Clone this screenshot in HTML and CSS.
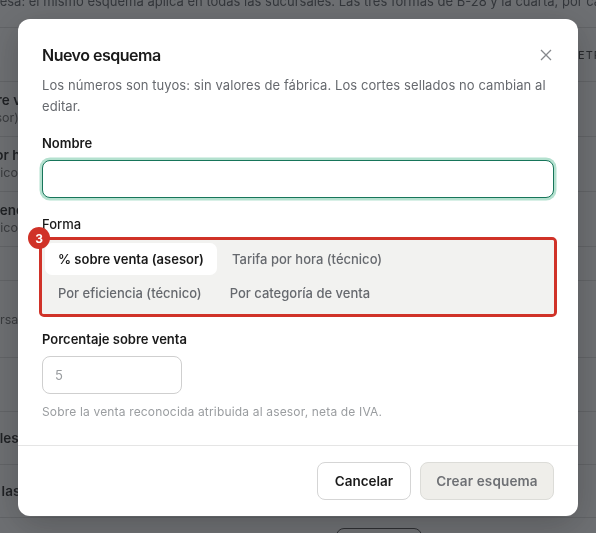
FILE: index.html
```html
<!DOCTYPE html>
<html lang="es">
<head>
<meta charset="utf-8">
<title>Nuevo esquema</title>
<link rel="stylesheet" href="styles.css">
</head>
<body>
<main class="page">
  <p class="intro">presa: el mismo esquema aplica en todas las sucursales. Las tres formas de B-28 y la cuarta, por categoría</p>
  <section class="table">
    <div class="row head"><span class="name"></span><span class="th">RETRO</span></div>
    <div class="row"><span class="name"><b>Fijo sobre venta</b><small>(asesor)</small></span></div>
    <div class="row"><span class="name"><b>Tarifa por hora</b><small>(técnico)</small></span></div>
    <div class="row"><span class="name"><b>Por eficiencia</b><small>(técnico)</small></span></div>
    <div class="row short"></div>
    <div class="row tall"><span class="name"><small>Sucursal</small></span></div>
    <div class="row"></div>
    <div class="row single"><span class="name"><b>Sucursales</b></span></div>
    <div class="row single"><span class="name"><b>Aplica a las</b></span></div>
  </section>
  <div class="ghost-btn"></div>
</main>
<div class="overlay">
  <div class="modal" role="dialog" aria-label="Nuevo esquema">
    <div class="body">
      <header class="title-row">
        <h2>Nuevo esquema</h2>
        <svg class="close" width="14" height="14" viewBox="0 0 14 14" aria-hidden="true"><path d="M2 2l10 10M12 2L2 12"/></svg>
      </header>
      <p class="desc">Los números son tuyos: sin valores de fábrica. Los cortes sellados no cambian al editar.</p>
      <label class="label strong">Nombre</label>
      <div class="input focused"></div>
      <label class="label forma">Forma</label>
      <div class="tabs-wrap">
        <span class="badge">3</span>
        <div class="tabs">
          <div class="tab-line">
            <span class="tab active">% sobre venta (asesor)</span>
            <span class="tab">Tarifa por hora (técnico)</span>
          </div>
          <div class="tab-line">
            <span class="tab">Por eficiencia (técnico)</span>
            <span class="tab">Por categoría de venta</span>
          </div>
        </div>
      </div>
      <label class="label strong pct">Porcentaje sobre venta</label>
      <div class="input small-input">5</div>
      <p class="hint">Sobre la venta reconocida atribuida al asesor, neta de IVA.</p>
    </div>
    <footer class="foot">
      <button class="btn cancel">Cancelar</button>
      <button class="btn create">Crear esquema</button>
    </footer>
  </div>
</div>
</body>
</html>
```
FILE: styles.css
```css
* { box-sizing: border-box; }
html, body { margin: 0; height: 100%; overflow: hidden; }
body { font-family: Inter, "Liberation Sans", sans-serif; background: #fff; color: #1a1a1a; }

.page { width: 596px; height: 533px; overflow: hidden; filter: blur(0.5px); }
.intro { margin: -7px 0 0 -13px; width: 700px; font-size: 13px; line-height: 16px; color: #55585c; white-space: nowrap; }
.table { margin-top: 18px; }
.row { height: 55px; border-bottom: 1px solid #dcdcdc; display: flex; justify-content: space-between; align-items: center; }
.row.head { border-top: 1px solid #dcdcdc; }
.row.short { height: 34px; }
.row.tall { height: 77px; }
.row.tall + .row { height: 54px; }
.row.single { height: 53px; }
.name { flex: none; margin-left: -54px; display: flex; flex-direction: column; white-space: nowrap; }
.name b { font-size: 13.5px; font-weight: 600; line-height: 17px; }
.name small { margin-left: 24px; font-size: 12.5px; line-height: 17px; color: #666; }
.th { flex: none; width: 18px; font-size: 11px; letter-spacing: 1px; color: #333; overflow: hidden; white-space: nowrap; text-indent: -8px; }
.ghost-btn { position: absolute; left: 336px; top: 528px; width: 86px; height: 30px; border: 1px solid #444; border-radius: 8px; }

.overlay { position: fixed; inset: 0; background: rgba(35, 38, 42, 0.66); }
.modal { position: absolute; left: 18px; top: 19px; width: 560px; height: 497px; background: #fff; border-radius: 12px; display: flex; flex-direction: column; box-shadow: 0 8px 36px rgba(0,0,0,.22); }
.body { flex: 1; padding: 24px 24px 0; }
.title-row { display: flex; justify-content: space-between; align-items: center; height: 24px; }
h2 { margin: 0; font-size: 16px; line-height: 24px; font-weight: 600; color: #1a1a1a; letter-spacing: -0.5px; }
.close { fill: none; stroke: #85888c; stroke-width: 1.3; margin-right: 1px; }
.desc { margin: 8px 0 0; font-size: 13px; line-height: 21px; color: #66696e; letter-spacing: 0.08px; }
.label { display: block; font-size: 13px; line-height: 18px; color: #1a1a1a; }
.strong { font-weight: 600; }
.desc + .label { margin-top: 17px; }
.input { height: 38px; border: 1px solid #cfcfcf; border-radius: 8px; background: #fff; margin-top: 8px; }
.focused { border-color: #17755a; box-shadow: 0 0 0 2.5px #b4e1cf; }
.forma { margin-top: 17px; font-weight: 500; }
.tabs-wrap { position: relative; margin: 4px -3px 0; border: 3px solid #d03228; border-radius: 5px; height: 80px; }
.badge { position: absolute; left: -14px; top: -13px; width: 22px; height: 22px; border-radius: 50%; background: #d03228; color: #fff; font-size: 12px; font-weight: 700; display: flex; align-items: center; justify-content: center; }
.tabs { background: #f2f2f0; height: 100%; padding: 3px; border-radius: 2px; display: flex; flex-direction: column; gap: 2px; }
.tab-line { display: flex; }
.tab { height: 32px; padding: 0 13px; margin-right: 2px; font-size: 13px; line-height: 32px; font-weight: 500; color: #66696e; border-radius: 7px; white-space: nowrap; }
.tab.active { background: #fff; color: #1a1a1a; font-weight: 600; }
.pct { margin-top: 13px; }
.small-input { width: 140px; padding: 0 12px; line-height: 36px; font-size: 13px; color: #9a9da0; margin-top: 8px; }
.hint { margin: 9px 0 0; font-size: 12px; line-height: 18px; color: #9a9da0; letter-spacing: 0.17px; }
.foot { height: 71px; border-top: 1px solid #e5e5e5; padding: 16px 24px; display: flex; justify-content: flex-end; gap: 9px; }
.btn { height: 38px; border-radius: 8px; font-family: inherit; font-size: 13.5px; font-weight: 600; padding: 0; }
.cancel { width: 94px; background: #fff; border: 1px solid #d5d5d5; color: #1a1a1a; }
.create { width: 134px; background: #efeeea; border: 1px solid #dcdcd8; color: #6e7074; letter-spacing: 0.15px; }
```
